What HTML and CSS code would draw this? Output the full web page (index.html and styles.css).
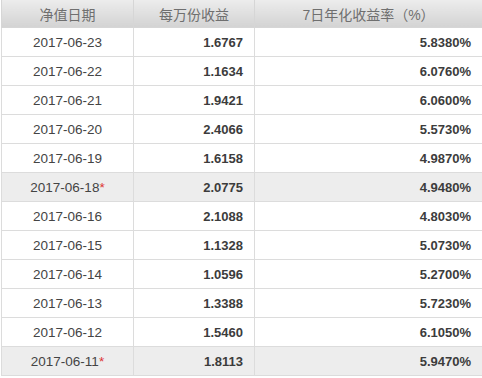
FILE: index.html
```html
<!DOCTYPE html>
<html lang="zh">
<head>
<meta charset="utf-8">
<link rel="stylesheet" href="styles.css">
</head>
<body>
<table class="nav">
  <colgroup><col class="c1"><col class="c2"><col class="c3"></colgroup>
  <thead>
    <tr><th>净值日期</th><th>每万份收益</th><th>7日年化收益率（%）</th></tr>
  </thead>
  <tbody>
    <tr><td class="date">2017-06-23</td><td class="num">1.6767</td><td class="num">5.8380%</td></tr>
    <tr><td class="date">2017-06-22</td><td class="num">1.1634</td><td class="num">6.0760%</td></tr>
    <tr><td class="date">2017-06-21</td><td class="num">1.9421</td><td class="num">6.0600%</td></tr>
    <tr><td class="date">2017-06-20</td><td class="num">2.4066</td><td class="num">5.5730%</td></tr>
    <tr><td class="date">2017-06-19</td><td class="num">1.6158</td><td class="num">4.9870%</td></tr>
    <tr class="hl"><td class="date">2017-06-18<span class="star">*</span></td><td class="num">2.0775</td><td class="num">4.9480%</td></tr>
    <tr><td class="date">2017-06-16</td><td class="num">2.1088</td><td class="num">4.8030%</td></tr>
    <tr><td class="date">2017-06-15</td><td class="num">1.1328</td><td class="num">5.0730%</td></tr>
    <tr><td class="date">2017-06-14</td><td class="num">1.0596</td><td class="num">5.2700%</td></tr>
    <tr><td class="date">2017-06-13</td><td class="num">1.3388</td><td class="num">5.7230%</td></tr>
    <tr><td class="date">2017-06-12</td><td class="num">1.5460</td><td class="num">6.1050%</td></tr>
    <tr class="hl"><td class="date">2017-06-11<span class="star">*</span></td><td class="num">1.8113</td><td class="num">5.9470%</td></tr>
  </tbody>
</table>
</body>
</html>
```
FILE: styles.css
```css
html, body {
  margin: 0;
  padding: 0;
  background: #fff;
}
body {
  font-family: Arial, "Liberation Sans", "Noto Sans CJK SC", sans-serif;
}
.nav {
  border-collapse: collapse;
  width: 481px;
  table-layout: fixed;
  margin-left: 1px;
}
.c1 { width: 132px; }
.c2 { width: 121px; }
.c3 { width: 228px; }
.nav th {
  height: 27px;
  padding: 0;
  font-weight: normal;
  font-size: 14px;
  color: #6f6f6f;
  background: linear-gradient(#ececec, #d3d3d3);
  border: 1px solid #d6d6d6;
  border-top: none;
  text-align: center;
  vertical-align: middle;
}
.nav td {
  height: 28px;
  padding: 0 11px;
  font-size: 13px;
  color: #333;
  border: 1px solid #dcdcdc;
  vertical-align: middle;
}
.nav td.date {
  text-align: center;
  color: #444;
  font-size: 13.5px;
}
.nav td.num {
  text-align: right;
  font-weight: bold;
  color: #3c3c3c;
}
.nav tr.hl td {
  background: #ededed;
}
.star {
  color: #d33;
}
```
